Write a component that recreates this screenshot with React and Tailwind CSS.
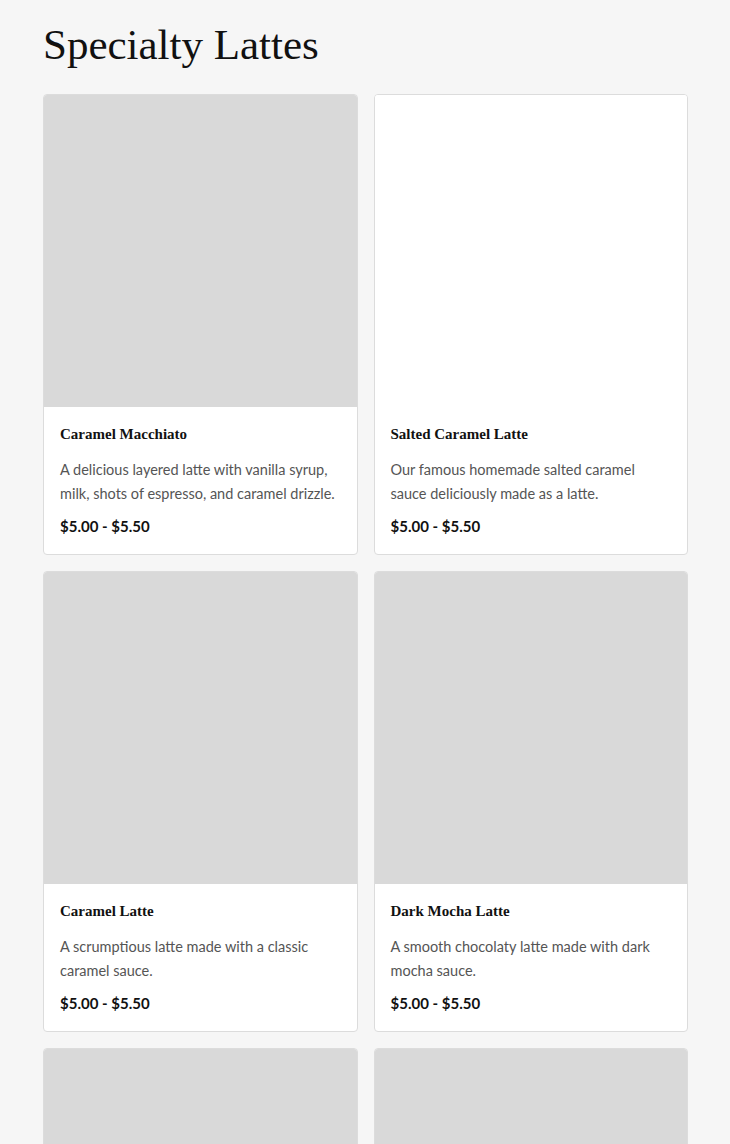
const ITEMS = [
  { name: 'Caramel Macchiato', desc: 'A delicious layered latte with vanilla syrup, milk, shots of espresso, and caramel drizzle.', price: '$5.00 - $5.50', img: true },
  { name: 'Salted Caramel Latte', desc: 'Our famous homemade salted caramel sauce deliciously made as a latte.', price: '$5.00 - $5.50', img: false },
  { name: 'Caramel Latte', desc: 'A scrumptious latte made with a classic caramel sauce.', price: '$5.00 - $5.50', img: true },
  { name: 'Dark Mocha Latte', desc: 'A smooth chocolaty latte made with dark mocha sauce.', price: '$5.00 - $5.50', img: true },
  { name: 'Vanilla Latte', desc: 'A classic latte made with vanilla syrup.', price: '$5.00 - $5.50', img: true },
  { name: 'White Mocha Latte', desc: 'A sweet latte made with white chocolate sauce.', price: '$5.00 - $5.50', img: true },
];

function MenuCard({ item }) {
  return (
    <div className="bg-white border border-[#dcdcdc] rounded-[4px] overflow-hidden">
      <div className={`h-[312px] ${item.img ? 'bg-[#d9d9d9]' : 'bg-white'}`} />
      <div className="px-4 pt-[17px] pb-[18px]">
        <h3 className="font-['Liberation_Serif',serif] font-bold text-[15px] leading-[20px] text-[#111]">{item.name}</h3>
        <p className="mt-[14px] text-[14.5px] leading-[24px] text-[#555] font-['Lato',sans-serif]">{item.desc}</p>
        <p className="mt-[10px] text-[15px] leading-[20px] font-bold text-[#111] font-['Lato',sans-serif]">{item.price}</p>
      </div>
    </div>
  );
}

export default function App() {
  return (
    <div className="h-screen overflow-hidden bg-[#f6f6f6] pl-[43px] pr-[42px] pt-[18px]">
      <h1 className="font-['Liberation_Serif',serif] text-[43px] leading-[54px] text-[#111]">Specialty Lattes</h1>
      <div className="mt-[22px] grid grid-cols-2 gap-4">
        {ITEMS.map((item) => (
          <MenuCard key={item.name} item={item} />
        ))}
      </div>
    </div>
  );
}
